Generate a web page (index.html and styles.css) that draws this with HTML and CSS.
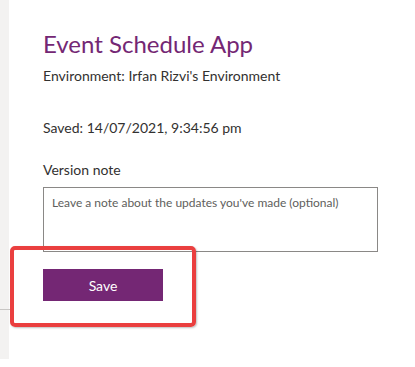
FILE: index.html
```html
<!DOCTYPE html>
<html lang="en">
<head>
<meta charset="utf-8">
<title>Event Schedule App</title>
<link rel="stylesheet" href="styles.css">
</head>
<body>
<div class="page">
  <aside class="rail">
    <div class="rail-divider"></div>
  </aside>
  <main class="panel">
    <h1 class="app-title">Event Schedule App</h1>
    <p class="env">Environment: Irfan Rizvi's Environment</p>
    <p class="saved">Saved: 14/07/2021, 9:34:56 pm</p>
    <label class="note-label" for="note">Version note</label>
    <textarea id="note" class="note" placeholder="Leave a note about the updates you've made (optional)"></textarea>
    <button class="save-btn" type="button">Save</button>
  </main>
  <div class="highlight"></div>
</div>
</body>
</html>
```

FILE: styles.css
```css
html, body {
  margin: 0;
  padding: 0;
  background: #ffffff;
}

body {
  font-family: "Lato", "Open Sans", sans-serif;
  color: #323130;
}

.page {
  position: relative;
  display: flex;
  width: 415px;
  height: 367px;
}

.rail {
  width: 9px;
  height: 359px;
  background: #f3f2f1;
  flex: none;
  display: flex;
  flex-direction: column;
  padding-top: 309px;
  box-sizing: border-box;
}

.rail-divider {
  width: 12px;
  height: 1px;
  background: #c8c6c4;
}

.panel {
  flex: 1;
  padding: 28px 0 0 34px;
  display: flex;
  flex-direction: column;
  align-items: flex-start;
}

.app-title {
  margin: 0;
  font-size: 24px;
  line-height: 32px;
  font-weight: 400;
  color: #742774;
}

.env {
  margin: 6px 0 0;
  font-size: 14px;
  line-height: 20px;
}

.saved {
  margin: 32px 0 0;
  font-size: 14px;
  line-height: 20px;
}

.note-label {
  margin: 22px 0 0;
  font-size: 14px;
  line-height: 20px;
}

.note {
  margin: 7px 0 0;
  width: 335px;
  height: 65px;
  box-sizing: border-box;
  border: 1px solid #8a8886;
  border-radius: 0;
  padding: 6px 8px;
  font-family: inherit;
  font-size: 12px;
  line-height: 18px;
  resize: none;
  color: #323130;
}

.note::placeholder {
  color: #605e5c;
  opacity: 1;
}

.save-btn {
  margin: 17px 0 0;
  width: 120px;
  height: 32px;
  border: none;
  border-radius: 0;
  background: #742774;
  color: #ffffff;
  font-family: inherit;
  font-size: 14px;
  padding: 0;
}

.highlight {
  position: absolute;
  left: 10px;
  top: 246px;
  width: 186px;
  height: 81px;
  box-sizing: border-box;
  border: 4px solid #ea3f3f;
  border-radius: 5px;
  box-shadow: 1px 1px 2px rgba(0, 0, 0, 0.25);
  pointer-events: none;
}
```
